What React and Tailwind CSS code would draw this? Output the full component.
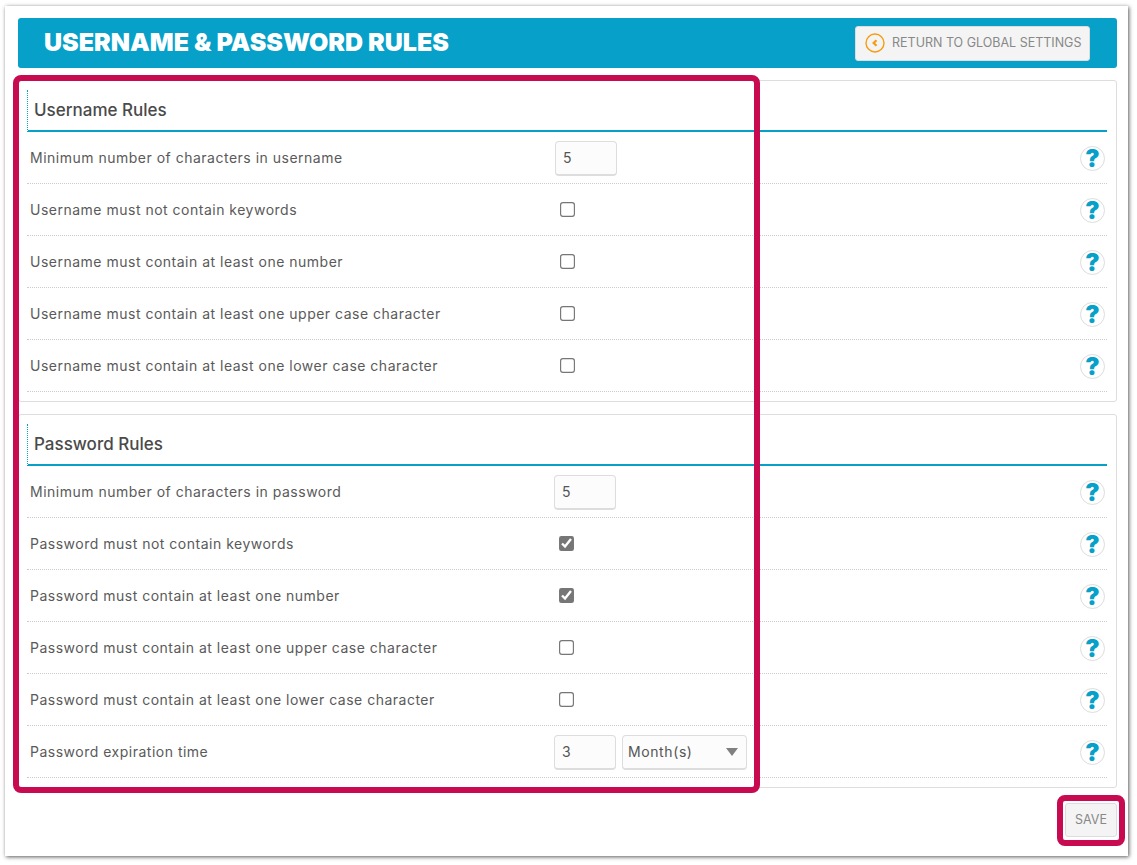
const HelpIcon = () => (
  <span className="flex h-[25px] w-[25px] shrink-0 items-center justify-center rounded-full border border-[#dddddd] bg-white pt-[2px] text-[24px] leading-none font-black text-[#06a0c9]">
    ?
  </span>
);

const NumberBox = ({ value }) => (
  <input
    readOnly
    value={value}
    className="mt-[1px] h-[35px] w-[62px] rounded-[4px] border border-b-2 border-[#dddddd] bg-[#fcfcfc] px-[7px] text-[14px] tracking-[0.3px] text-[#555555] outline-none"
  />
);

const Row = ({ label, offset, children }) => (
  <div className="flex h-[52px] items-center border-b border-dotted border-[#cccccc]">
    <div className={`pl-[3px] text-[14px] tracking-[0.5px] text-[#5a5a5a] ${offset ? 'w-[527px]' : 'w-[528px]'}`}>{label}</div>
    <div className="flex flex-1 items-center gap-[6px]">{children}</div>
    <div className="mt-[1px] mr-[2px]">
      <HelpIcon />
    </div>
  </div>
);

const Check = ({ checked }) => (
  <input
    type="checkbox"
    readOnly
    checked={!!checked}
    className="ml-[6px] h-[13px] w-[13px] scale-[1.15] accent-[#767676]"
  />
);

const Section = ({ title, className, children }) => (
  <section className={`rounded-[3px] border border-[#dddddd] pt-[9px] pr-[9px] pl-[8px] ${className}`}>
    <h2 className="flex h-[42px] items-center border-b-2 border-l border-b-[#06a0c9] border-l-[#06a0c9] [border-left-style:dotted] pt-[1px] pl-[6px] text-[17px] font-medium text-[#4a4a4a]">
      {title}
    </h2>
    {children}
  </section>
);

const App = () => {
  const usernameRules = [
    'Username must not contain keywords',
    'Username must contain at least one number',
    'Username must contain at least one upper case character',
    'Username must contain at least one lower case character',
  ];

  return (
    <div className="relative h-[865px] w-[1137px] bg-white font-['Inter',sans-serif]">
      <div className="absolute top-[6px] left-[5px] h-[850px] w-[1123px] bg-white pt-[12px] pr-[11px] pl-[13px] shadow-[1px_1px_4px_rgba(0,0,0,0.65)]">
        {/* Title bar */}
        <header className="flex h-[50px] items-center justify-between rounded-[3px] bg-[#06a0c9] pr-[27px] pl-[26px]">
          <h1 className="text-[25px] font-black text-white">USERNAME &amp; PASSWORD RULES</h1>
          <button className="flex h-[35px] w-[235px] items-center gap-[7px] rounded-[3px] border border-[#dddddd] bg-[#f4f4f4] pl-[9px] text-[12.5px] text-[#888888]">
            <svg width="20" height="20" viewBox="0 0 20 20" fill="none" stroke="#f59c12">
              <circle cx="10" cy="10" r="9" strokeWidth="1.4" />
              <path d="M11.5 7.2 8.6 10l2.9 2.8" strokeWidth="2.2" />
            </svg>
            RETURN TO GLOBAL SETTINGS
          </button>
        </header>

        <Section title="Username Rules" className="mt-[12px] h-[322px]">
          <Row label="Minimum number of characters in username">
            <NumberBox value="5" />
          </Row>
          {usernameRules.map((label) => (
            <Row key={label} label={label}>
              <Check />
            </Row>
          ))}
        </Section>

        <Section title="Password Rules" className="mt-[12px] h-[374px]">
          <Row offset label="Minimum number of characters in password">
            <NumberBox value="5" />
          </Row>
          <Row offset label="Password must not contain keywords">
            <Check checked />
          </Row>
          <Row offset label="Password must contain at least one number">
            <Check checked />
          </Row>
          <Row offset label="Password must contain at least one upper case character">
            <Check />
          </Row>
          <Row offset label="Password must contain at least one lower case character">
            <Check />
          </Row>
          <Row offset label="Password expiration time">
            <NumberBox value="3" />
            <div className="mt-[1px] flex h-[35px] w-[125px] items-center justify-between rounded-[4px] border border-b-2 border-[#dddddd] bg-[#fcfcfc] pr-[8px] pl-[5px] text-[14px] tracking-[0.6px] text-[#555555]">
              Month(s)
              <svg width="12" height="8" viewBox="0 0 12 8">
                <path d="M0 0h12L6 8z" fill="#808080" />
              </svg>
            </div>
          </Row>
        </Section>

        <div className="mt-[15px] flex justify-end">
          <button className="h-[34px] w-[52px] rounded-[3px] border border-[#dddddd] bg-[#f4f4f4] text-[12.5px] text-[#888888]">
            SAVE
          </button>
        </div>
      </div>

      {/* Annotation frames over the screenshot */}
      <div className="absolute top-[75px] left-[13px] h-[718px] w-[747px] rounded-[8px] border-[6px] border-[#c80a50]" />
      <div className="absolute top-[795px] left-[1057px] h-[51px] w-[68px] rounded-[8px] border-[6px] border-[#c80a50]" />
    </div>
  );
};

export default App;
